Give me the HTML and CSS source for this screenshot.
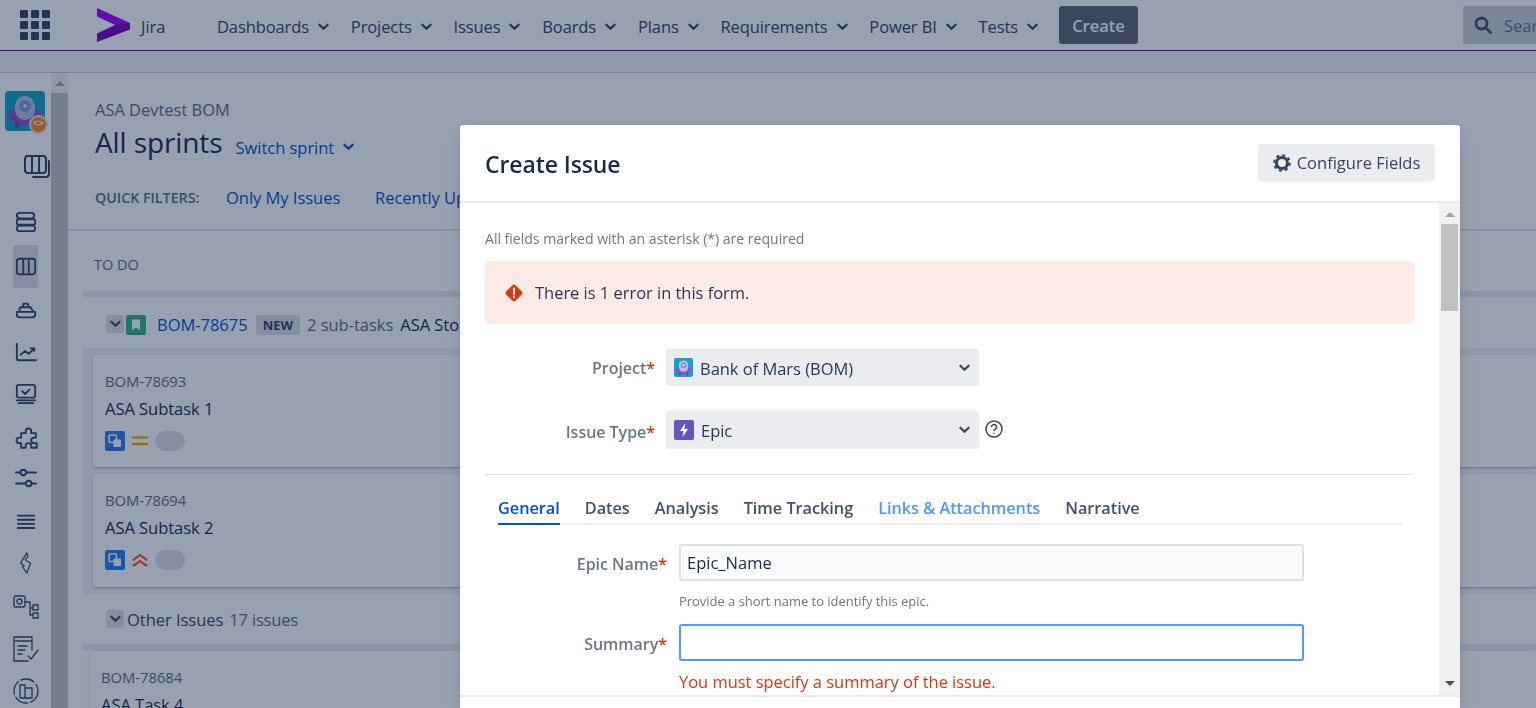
FILE: index.html
```html
<!DOCTYPE html>
<html lang="en">
<head>
    <meta charset="utf-8">
    <title>Create Issue - Jira</title>
    <link rel="stylesheet" href="styles.css">
</head>
<body>
    <svg class="defs" width="0" height="0">
        <symbol id="chev" viewBox="0 0 12 8"><path d="M1.5 1.5 6 6l4.5-4.5" fill="none" stroke="currentColor" stroke-width="2.4" stroke-linecap="round" stroke-linejoin="round"/></symbol>
        <symbol id="subtask" viewBox="0 0 20 20"><rect width="20" height="20" rx="2" fill="#2a7cf0"/><rect x="4" y="4" width="7.5" height="7.5" rx="1" fill="none" stroke="#fff" stroke-width="1.6"/><rect x="8.5" y="8.5" width="7.5" height="7.5" rx="1" fill="#fff"/></symbol>
        <symbol id="avatar" viewBox="0 0 40 40"><rect width="40" height="40" rx="4" fill="#14a3c7"/><ellipse cx="20" cy="25" rx="16" ry="9" fill="#8e4fd0"/><rect x="10" y="31" width="4" height="6" fill="#7a3fb8"/><rect x="26" y="31" width="4" height="6" fill="#7a3fb8"/><rect x="10" y="5" width="20" height="24" rx="10" fill="#b4c2de"/><circle cx="20" cy="15" r="6" fill="#7f9bd8"/><circle cx="20" cy="15" r="1.800" fill="#e8eefc"/></symbol>
    </svg>

    <div class="page">
        <header class="topbar">
            <svg class="apps" width="30" height="30" viewBox="0 0 30 30" fill="#344563">
                <rect x="0" y="0" width="8" height="8" rx="1"/><rect x="11" y="0" width="8" height="8" rx="1"/><rect x="22" y="0" width="8" height="8" rx="1"/>
                <rect x="0" y="11" width="8" height="8" rx="1"/><rect x="11" y="11" width="8" height="8" rx="1"/><rect x="22" y="11" width="8" height="8" rx="1"/>
                <rect x="0" y="22" width="8" height="8" rx="1"/><rect x="11" y="22" width="8" height="8" rx="1"/><rect x="22" y="22" width="8" height="8" rx="1"/>
            </svg>
            <svg class="logo" width="34" height="34" viewBox="0 0 34 34">
                <path d="M0 0 33 15V19L18 17 0 8.500Z" fill="#a100ff"/>
                <path d="M0 25.500 18 17 33 15V21.500L0 34Z" fill="#7500c0"/>
            </svg>
            <span class="product">Jira</span>
            <nav class="nav">
                <a class="nav-item">Dashboards <svg class="caret"><use href="#chev"/></svg></a>
                <a class="nav-item">Projects <svg class="caret"><use href="#chev"/></svg></a>
                <a class="nav-item">Issues <svg class="caret"><use href="#chev"/></svg></a>
                <a class="nav-item">Boards <svg class="caret"><use href="#chev"/></svg></a>
                <a class="nav-item">Plans <svg class="caret"><use href="#chev"/></svg></a>
                <a class="nav-item">Requirements <svg class="caret"><use href="#chev"/></svg></a>
                <a class="nav-item">Power BI <svg class="caret"><use href="#chev"/></svg></a>
                <a class="nav-item">Tests <svg class="caret"><use href="#chev"/></svg></a>
            </nav>
            <button class="create-btn">Create</button>
            <div class="search">
                <svg width="18" height="18" viewBox="0 0 18 18" fill="none" stroke="#42526e" stroke-width="2.800"><circle cx="7.500" cy="7.500" r="5.500"/><path d="m11.500 11.500 5 5" stroke-linecap="round"/></svg>
                <span>Search</span>
            </div>
        </header>
        <div class="subbar"></div>

        <div class="workspace">
            <aside class="sidebar">
                <div class="project-avatar">
                    <svg width="40" height="40"><use href="#avatar"/></svg>
                    <span class="avatar-badge">&lt;&gt;</span>
                </div>
                <svg class="side-icon board-back" viewBox="0 0 26 24"><rect x="1" y="1" width="21" height="17" rx="3"/><path d="M8 1v17M15 1v17M25 6v13a3 3 0 0 1-3 3H9"/></svg>
                <svg class="side-icon first" viewBox="0 0 24 24"><rect x="2" y="2" width="19" height="6" rx="3"/><rect x="2" y="9" width="20" height="6" rx="2"/><rect x="2" y="16" width="20" height="6" rx="3"/></svg>
                <div class="side-active"><svg class="side-icon" viewBox="0 0 24 24"><rect x="2" y="3" width="20" height="17" rx="3"/><path d="M9 3v17M15 3v17"/></svg></div>
                <svg class="side-icon" viewBox="0 0 24 24"><path d="M2 14h20v3a3 3 0 0 1-3 3H5a3 3 0 0 1-3-3ZM5 14v-3a2 2 0 0 1 2-2h10l3 5M9 9V5h5l1 4"/></svg>
                <svg class="side-icon" viewBox="0 0 24 24"><path d="M2 3v16a2 2 0 0 0 2 2h19M6 15l5-4 4 3 6-6M17 8h4v3"/></svg>
                <svg class="side-icon" viewBox="0 0 24 24"><rect x="2" y="2" width="20" height="14" rx="2"/><path d="m8 9 3 3 5-5M2 19h20M4 22h16"/></svg>
                <svg class="side-icon puzzle" viewBox="0 0 24 24"><path d="M9 3a3 3 0 0 1 6 0v2h5v5h-2a3 3 0 0 0 0 6h3v5h-6v-2a3 3 0 0 0-6 0v2H4v-5H2a3 3 0 0 1 0-6h2V5h5Z" transform="translate(.5 .5)"/></svg>
                <svg class="side-icon sliders" viewBox="0 0 24 24"><path d="M1 6h5M12 6h11M1 18h11M18 18h5"/><circle cx="9" cy="6" r="3"/><circle cx="15" cy="18" r="3"/></svg>
                <svg class="side-icon lines" viewBox="0 0 24 24"><path d="M3 5h18M3 9.500h18M3 14h18M3 18.500h18"/></svg>
                <svg class="side-icon thin bolt" viewBox="0 0 24 24"><path d="M13 1 6 12l4 3-2 1 5 7 4-11-4-2-2-2 3-3Z"/></svg>
                <svg class="side-icon thin wide flow" viewBox="0 0 26 26"><rect x="1" y="1" width="11" height="11" rx="1.500"/><circle cx="6.500" cy="6.500" r="2.500"/><path d="M12 7h5v13M17 13h3M17 20h3"/><rect x="20" y="10" width="5" height="5"/><rect x="20" y="18" width="5" height="5"/></svg>
                <svg class="side-icon thin wide check" viewBox="0 0 26 26"><path d="M19 14V1H1v24h14M1 5h18M5 10h9M5 14h7M5 18h4M15 20l3 3 7-9"/></svg>
                <svg class="side-icon thin wide" viewBox="0 0 26 26"><circle cx="13" cy="13" r="12" stroke-dasharray="14 3"/><path d="M7 20V7h5v13M12 10h7v10H7"/></svg>
            </aside>
            <div class="side-scroll">
                <span class="arrow-up dim"></span>
                <div class="side-thumb"></div>
            </div>

            <main class="board">
                <div class="crumb">ASA Devtest BOM</div>
                <div class="title-row">
                    <h1 class="board-title">All sprints</h1>
                    <a class="switch">Switch sprint <svg class="caret"><use href="#chev"/></svg></a>
                </div>
                <div class="filters">
                    <span class="filters-label">QUICK FILTERS:</span>
                    <a class="filter">Only My Issues</a>
                    <a class="filter">Recently Updated</a>
                </div>
                <div class="col-head">TO DO</div>

                <section class="lanes">
                    <div class="lane-rule"></div>
                    <div class="lane-head">
                        <span class="toggle"><svg class="caret"><use href="#chev"/></svg></span>
                        <svg class="story" width="20" height="20" viewBox="0 0 20 20"><rect width="20" height="20" rx="2" fill="#36b37e"/><path d="M6 4.500h8v11l-4-3-4 3Z" fill="#fff"/></svg>
                        <a class="lane-key">BOM-78675</a>
                        <span class="badge">NEW</span>
                        <span class="lane-count">2 sub-tasks</span>
                        <span class="lane-name">ASA Story</span>
                    </div>
                    <div class="lane-body">
                        <article class="card">
                            <div class="card-key">BOM-78693</div>
                            <div class="card-title">ASA Subtask 1</div>
                            <div class="card-meta">
                                <svg width="20" height="20"><use href="#subtask"/></svg>
                                <svg width="16" height="20" viewBox="0 0 16 20" stroke="#ffab00" stroke-width="2.400"><path d="M0 6.500h16M0 13h16"/></svg>
                                <span class="pill"></span>
                            </div>
                        </article>
                        <article class="card">
                            <div class="card-key">BOM-78694</div>
                            <div class="card-title">ASA Subtask 2</div>
                            <div class="card-meta">
                                <svg width="20" height="20"><use href="#subtask"/></svg>
                                <svg width="16" height="20" viewBox="0 0 16 20" fill="none" stroke="#ff5630" stroke-width="2.200"><path d="m1 10 7-5 7 5M1 16l7-5 7 5"/></svg>
                                <span class="pill"></span>
                            </div>
                        </article>
                    </div>
                    <div class="lane-head other">
                        <span class="toggle"><svg class="caret"><use href="#chev"/></svg></span>
                        <span class="lane-other">Other Issues</span>
                        <span class="lane-count">17 issues</span>
                    </div>
                    <div class="lane-rule tall"></div>
                    <article class="card last">
                        <div class="card-key">BOM-78684</div>
                        <div class="card-title">ASA Task 4</div>
                    </article>
                </section>
            </main>
        </div>
    </div>

    <div class="blanket"></div>

    <div class="modal">
        <div class="modal-head">
            <h2 class="modal-title">Create Issue</h2>
            <button class="config-btn">
                <svg width="18" height="18" viewBox="0 0 18 18" fill="none" stroke="#344563"><circle cx="9" cy="9" r="5.500" stroke-width="3"/><circle cx="9" cy="9" r="7.800" stroke-width="2" stroke-dasharray="3 3.120"/></svg>
                Configure Fields
            </button>
        </div>
        <div class="modal-main">
            <div class="modal-body">
                <p class="required-note">All fields marked with an asterisk (*) are required</p>
                <div class="error-box">
                    <svg width="20" height="20" viewBox="0 0 20 20"><rect x="3.500" y="3.500" width="13" height="13" rx="2" transform="rotate(45 10 10)" fill="#de350b"/><path d="M10 5.500v5.500M10 13.500v1" stroke="#fff" stroke-width="2" stroke-linecap="round"/></svg>
                    <span>There is 1 error in this form.</span>
                </div>

                <div class="field-row project">
                    <label class="field-label">Project<span class="req">*</span></label>
                    <div class="picker">
                        <svg width="19" height="19"><use href="#avatar"/></svg>
                        <span>Bank of Mars (BOM)</span>
                        <svg class="caret"><use href="#chev"/></svg>
                    </div>
                </div>
                <div class="field-row type">
                    <label class="field-label">Issue Type<span class="req">*</span></label>
                    <div class="picker">
                        <svg width="20" height="20" viewBox="0 0 20 20"><rect width="20" height="20" rx="2" fill="#6554c0"/><path d="M11.500 3 6 11h3.500L8.500 17 14 9h-3.500Z" fill="#fff"/></svg>
                        <span>Epic</span>
                        <svg class="caret"><use href="#chev"/></svg>
                    </div>
                    <svg class="help" width="18" height="18" viewBox="0 0 18 18" fill="none" stroke="#344563" stroke-width="1.500"><circle cx="9" cy="9" r="8"/><path d="M6.500 7a2.500 2.500 0 1 1 3.800 2.100c-.9.5-1.300 1-1.300 1.900M9 12.800v1"/></svg>
                </div>

                <hr class="divider">

                <div class="tabs">
                    <a class="tab active">General</a>
                    <a class="tab">Dates</a>
                    <a class="tab">Analysis</a>
                    <a class="tab">Time Tracking</a>
                    <a class="tab link">Links &amp; Attachments</a>
                    <a class="tab">Narrative</a>
                </div>

                <div class="input-row">
                    <label class="input-label">Epic Name<span class="req">*</span></label>
                    <input class="text-input" type="text" value="Epic_Name">
                </div>
                <p class="hint">Provide a short name to identify this epic.</p>
                <div class="input-row summary">
                    <label class="input-label">Summary<span class="req">*</span></label>
                    <input class="text-input focused" type="text">
                </div>
                <p class="field-error">You must specify a summary of the issue.</p>
            </div>
            <div class="modal-scroll">
                <span class="arrow-up"></span>
                <div class="modal-thumb"></div>
                <span class="arrow-down"></span>
            </div>
        </div>
        <div class="modal-foot"></div>
    </div>
</body>
</html>
```

FILE: styles.css
```css
* {
    box-sizing: border-box;
}
html,
body {
    margin: 0;
    height: 708px;
    overflow: hidden;
}
body {
    font-family: "Open Sans", "Noto Sans", Arial, sans-serif;
    font-size: 16.500px;
    letter-spacing: -0.03px;
    color: #172b4d;
    background: #fff;
}
a {
    text-decoration: none;
}
.defs {
    position: absolute;
}
.caret {
    width: 11px;
    height: 8px;
    flex: none;
    color: #344563;
}
.page {
    height: 708px;
    display: flex;
    flex-direction: column;
}

/* top bar */
.topbar {
    height: 51px;
    flex: none;
    display: flex;
    align-items: center;
    border-bottom: 1px solid #7500c0;
    background: #fff;
    padding-left: 20px;
    color: #344563;
}
.apps {
    margin-top: -1px;
}
.logo {
    margin-left: 47px;
    margin-top: -1px;
}
.product {
    margin-left: 10px;
    width: 76px;
    margin-top: 2px;
}
.nav {
    display: flex;
    gap: 21.800px;
    margin-top: 3px;
    letter-spacing: -0.1px;
}
.nav-item {
    display: flex;
    align-items: center;
    gap: 9px;
    color: #344563;
    white-space: nowrap;
}
.create-btn {
    margin-left: 21px;
    width: 79px;
    height: 38px;
    flex: none;
    border: 0;
    border-radius: 3px;
    background: #606570;
    color: #fff;
    font: 600 16.500px "Open Sans", sans-serif;
}
.search {
    margin-left: 325px;
    flex: 1;
    height: 38px;
    background: #cfd1d8;
    border-radius: 3px 0 0 3px;
    display: flex;
    align-items: center;
    gap: 12px;
    padding-left: 11px;
    color: #5e6c84;
    overflow: hidden;
    min-width: 0;
}
.search svg,
.search span {
    flex: none;
}
.subbar {
    height: 22px;
    flex: none;
    background: #f0f2f5;
    border-bottom: 1px solid #c1c7d0;
}

/* left rail */
.workspace {
    flex: 1;
    display: flex;
    min-height: 0;
}
.sidebar {
    width: 51px;
    flex: none;
    display: flex;
    flex-direction: column;
    align-items: center;
    padding-top: 18px;
    overflow: hidden;
}
.project-avatar {
    position: relative;
    width: 40px;
    height: 40px;
    margin-left: -1px;
    flex: none;
}
.avatar-badge {
    position: absolute;
    right: -3px;
    bottom: -3px;
    width: 19px;
    height: 19px;
    border-radius: 50%;
    border: 2px solid #dfe1e6;
    background: #ff8b00;
    color: #fff;
    font: 700 9px/15px "Liberation Mono", monospace;
    text-align: center;
}
.side-icon {
    width: 22px;
    height: 22px;
    flex: none;
    fill: none;
    stroke: #344563;
    stroke-width: 2;
    stroke-linecap: round;
    stroke-linejoin: round;
    margin-top: 20px;
}
.board-back {
    width: 26px;
    height: 24px;
    margin: 24px 0 0 23px;
}
.side-icon.first {
    margin-top: 32px;
}
.side-active {
    width: 25px;
    height: 43px;
    flex: none;
    margin: 12px 0 -9px;
    border-radius: 3px;
    background: #dfe1e6;
    display: flex;
    align-items: center;
    justify-content: center;
}
.side-active .side-icon {
    margin: 0;
}
.side-icon.puzzle {
    margin-top: 23px;
    overflow: visible;
    margin-left: 4px;
}
.side-icon.sliders {
    margin-top: 17px;
}
.side-icon.lines {
    margin-top: 22px;
}
.side-icon.bolt {
    margin-top: 19px;
}
.side-icon.thin {
    stroke-width: 1.3;
}
.side-icon.wide {
    width: 26px;
    height: 26px;
    margin-top: 16px;
}
.side-icon.flow {
    margin-top: 21px;
}
.side-icon.check {
    margin-top: 15px;
}
.side-scroll {
    width: 17px;
    flex: none;
    background: #f1f1f1;
    display: flex;
    flex-direction: column;
    align-items: center;
    padding-top: 8px;
}
.side-thumb {
    width: 17px;
    flex: 1;
    margin-top: 7px;
    background: #c1c1c1;
}
.arrow-up,
.arrow-down {
    width: 0;
    height: 0;
    flex: none;
    border-left: 5px solid transparent;
    border-right: 5px solid transparent;
}
.arrow-up {
    border-bottom: 5px solid #a3a3a3;
}
.arrow-down {
    border-top: 5px solid #505050;
}

/* board */
.board {
    flex: 1;
    min-width: 0;
    padding-top: 27px;
    overflow: hidden;
}
.crumb {
    height: 20px;
    line-height: 20px;
    margin-left: 27px;
    color: #5e6c84;
}
.title-row {
    margin: 5px 0 0 27px;
    height: 34px;
    display: flex;
    align-items: center;
    gap: 13px;
}
.board-title {
    margin: 0;
    font-size: 28px;
    font-weight: 400;
    letter-spacing: -0.1px;
    white-space: nowrap;
}
.switch {
    margin-top: 10px;
    display: flex;
    align-items: center;
    gap: 9px;
    color: #0052cc;
}
.switch .caret {
    color: #0052cc;
}
.filters {
    margin-top: 23px;
    height: 30px;
    padding-left: 27px;
    display: flex;
    align-items: center;
    white-space: nowrap;
}
.filters-label {
    width: 131px;
    font-size: 14.300px;
    font-weight: 600;
    color: #5e6c84;
}
.filter {
    width: 149px;
    color: #0052cc;
}
.col-head {
    margin-top: 17px;
    height: 62px;
    padding: 24px 0 0 26px;
    border-top: 2px solid #dfe1e6;
    font-size: 14.500px;
    font-weight: 500;
    color: #5e6c84;
}
.lanes {
    margin-left: 15px;
}
.lane-rule {
    height: 6px;
    background: #e8eaee;
}
.lane-rule.tall {
    height: 7px;
}
.lane-head {
    height: 51px;
    padding: 18px 0 0 23px;
    display: flex;
    align-items: flex-start;
    white-space: nowrap;
    line-height: 20px;
}
.lane-head.other {
    height: 50px;
    padding-top: 16px;
}
.toggle {
    width: 18px;
    height: 18px;
    border-radius: 3px;
    background: #dfe1e6;
    display: flex;
    align-items: center;
    justify-content: center;
}
.story {
    margin-left: 2px;
}
.lane-key {
    margin-left: 11px;
    width: 99px;
    color: #0052cc;
}
.badge {
    width: 44px;
    height: 20px;
    border-radius: 3px;
    background: #dfe1e6;
    color: #344563;
    font-size: 13px;
    font-weight: 700;
    text-align: center;
}
.lane-count {
    margin-left: 7px;
    color: #5e6c84;
}
.lane-name {
    margin-left: 7px;
}
.lane-other {
    margin-left: 3px;
    color: #344563;
}
.other .lane-count {
    margin-left: 6px;
    letter-spacing: -0.2px;
}
.lane-body {
    height: 246px;
    padding: 7px 0 0 10px;
    background: #f1f2f4;
    display: flex;
    flex-direction: column;
    gap: 7px;
}
.card {
    height: 112px;
    padding: 17px 12px 0;
    background: #fff;
    border-radius: 3px;
    box-shadow: 0 1px 2px rgba(9, 30, 66, 0.3);
}
.card + .card {
    height: 113px;
}
.card.last {
    margin-left: 6px;
    height: 120px;
}
.card-key {
    font-size: 14.800px;
    font-weight: 500;
    line-height: 18px;
    color: #5e6c84;
}
.card-title {
    margin-top: 9px;
    line-height: 20px;
}
.card-meta {
    margin-top: 12px;
    display: flex;
    align-items: center;
    gap: 7px;
}
.pill {
    width: 30px;
    height: 20px;
    border-radius: 10px;
    background: #dfe1e6;
}

.blanket {
    position: fixed;
    inset: 0;
    background: rgba(9, 30, 66, 0.42);
}

/* dialog */
.modal {
    position: fixed;
    left: 460px;
    top: 125px;
    width: 1000px;
    height: 583px;
    background: #fff;
    border-radius: 3px 3px 0 0;
    box-shadow: 0 8px 16px -4px rgba(9, 30, 66, 0.25), 0 0 1px rgba(9, 30, 66, 0.31);
    display: flex;
    flex-direction: column;
}
.modal-head {
    height: 78px;
    flex: none;
    padding: 0 25px;
    display: flex;
    align-items: center;
    justify-content: space-between;
    border-bottom: 2px solid #ebecf0;
}
.modal-title {
    margin: 2px 0 0;
    font-size: 23px;
    font-weight: 600;
    letter-spacing: -0.1px;
}
.config-btn {
    width: 177px;
    height: 37px;
    margin-top: -1px;
    padding-top: 1px;
    border: 0;
    border-radius: 3px;
    background: #ebecf0;
    color: #344563;
    font: 16.500px "Open Sans", sans-serif;
    display: flex;
    align-items: center;
    justify-content: center;
    gap: 6px;
    white-space: nowrap;
}
.modal-main {
    flex: 1;
    display: flex;
    min-height: 0;
}
.modal-body {
    flex: 1;
    min-width: 0;
    padding: 0 25px;
    overflow: hidden;
}
.modal-scroll {
    width: 21px;
    flex: none;
    background: #f1f1f1;
    display: flex;
    flex-direction: column;
    align-items: center;
    padding: 9px 0 9px;
}
.modal-thumb {
    width: 17px;
    height: 87px;
    margin-top: 7px;
    margin-bottom: auto;
    background: #c1c1c1;
}
.modal-foot {
    height: 13px;
    flex: none;
    border-top: 2px solid #ebecf0;
}
.required-note {
    margin: 26px 0 0;
    font-size: 14.100px;
    line-height: 20px;
    color: #6b778c;
}
.error-box {
    margin-top: 12px;
    height: 63px;
    padding-left: 19px;
    display: flex;
    align-items: center;
    gap: 11px;
    border-radius: 3px;
    background: #ffebe6;
    color: #253858;
}
.field-row {
    display: flex;
    align-items: center;
    height: 37px;
    margin-top: 25px;
}
.field-row.type {
    height: 38px;
}
.field-label {
    width: 171px;
    padding-right: 1px;
    padding-top: 1px;
    text-align: right;
    font-size: 16px;
    font-weight: 600;
    color: #6b778c;
}
.type .field-label {
    padding-top: 3px;
}
.req {
    color: #de350b;
}
.picker {
    margin-left: 10px;
    width: 313px;
    height: 100%;
    padding: 0 9px 0 8px;
    display: flex;
    align-items: center;
    gap: 7px;
    border-radius: 3px;
    background: #ebecf0;
    color: #253858;
}
.picker span {
    flex: 1;
    padding-top: 1px;
}
.help {
    margin: -3px 0 0 6px;
}
.divider {
    margin: 25px 0 0;
    border: 0;
    border-top: 1px solid #dfe1e6;
}
.tabs {
    margin: 21px 12px 0 13px;
    height: 29px;
    display: flex;
    gap: 25px;
    border-bottom: 2px solid #ebecf0;
}
.tab {
    height: 29px;
    font-size: 16.300px;
    font-weight: 600;
    line-height: 24px;
    color: #42526e;
    white-space: nowrap;
}
.tab.active {
    color: #0052cc;
    border-bottom: 2px solid #0052cc;
}
.tab.link {
    color: #4c9aff;
}
.input-row {
    display: flex;
    align-items: center;
    margin-top: 19px;
}
.input-row.summary {
    margin-top: 14px;
}
.input-label {
    width: 182px;
    padding-top: 2px;
    text-align: right;
    font-size: 16px;
    font-weight: 600;
    color: #6b778c;
}
.text-input {
    margin-left: 12px;
    width: 625px;
    height: 37px;
    padding: 0 6px;
    border: 2px solid #dfe1e6;
    border-radius: 3px;
    background: #fafbfc;
    color: #172b4d;
    font: 16.500px "Open Sans", sans-serif;
}
.text-input.focused {
    border-color: #4c9aff;
    background: #fff;
}
.hint {
    margin: 11px 0 0 194px;
    font-size: 13px;
    line-height: 18px;
    color: #6b778c;
}
.field-error {
    margin: 11px 0 0 194px;
    line-height: 20px;
    color: #de350b;
}
```
